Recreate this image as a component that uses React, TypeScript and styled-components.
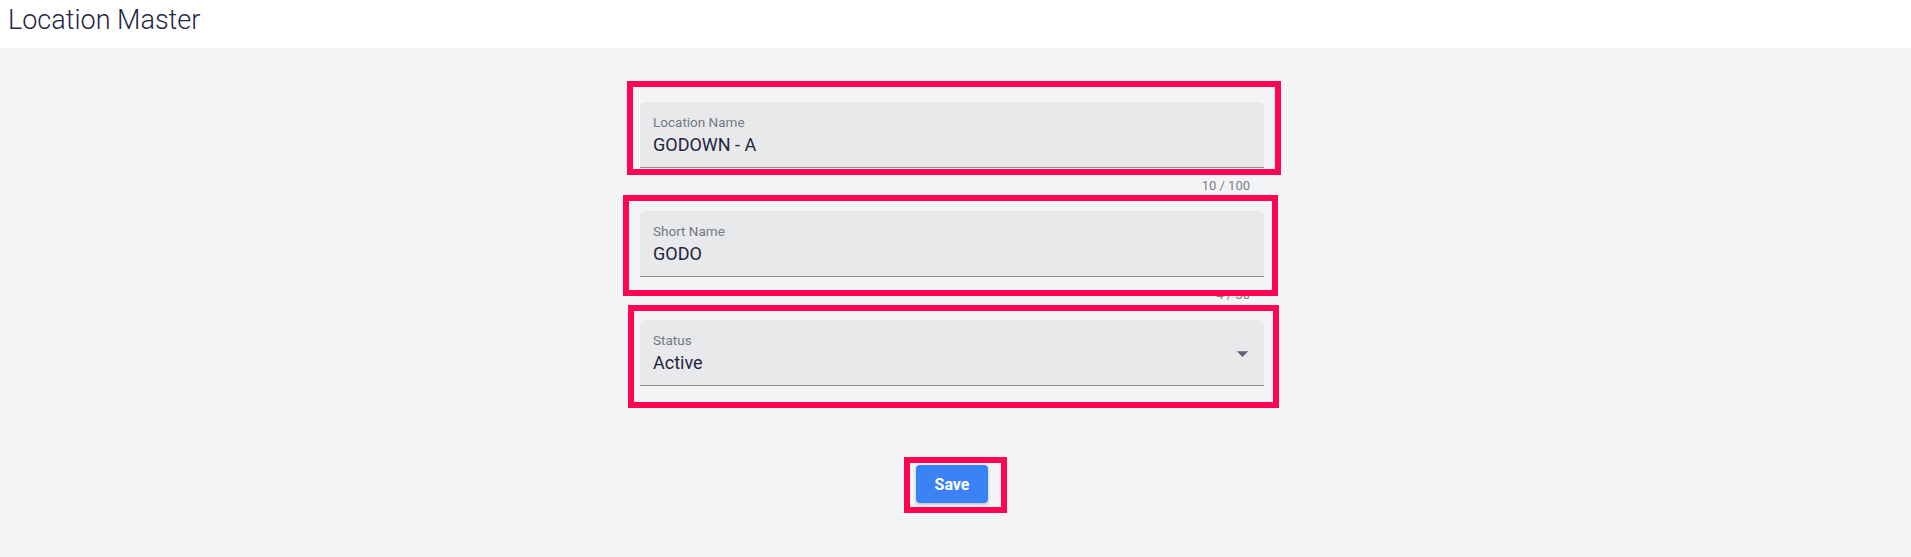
import React from 'react'
import styled, { createGlobalStyle } from 'styled-components'

const GlobalStyle = createGlobalStyle`
    html, body {
        margin: 0;
        padding: 0;
        height: 100%;
    }
    body {
        font-family: Roboto, 'Liberation Sans', Arial, sans-serif;
        background: #f3f4f6;
    }
    #root {
        min-height: 100vh;
        display: flex;
        flex-direction: column;
    }
`

const Header = styled.header`
    height: 48px;
    box-sizing: border-box;
    padding: 4px 0 0 8px;
    background: #ffffff;
`

const Title = styled.h1`
    margin: 0;
    font-family: Roboto, sans-serif;
    font-weight: 300;
    font-size: 27px;
    line-height: 1.2;
    color: #1e2745;
`

const Main = styled.main`
    flex: 1;
    display: flex;
    justify-content: center;
    padding: 54px 7px 0 0;
    background: #f3f4f6;
`

const Form = styled.form`
    width: 624px;
    display: flex;
    flex-direction: column;
    gap: 16px;
`

const FieldBlock = styled.div`
    display: flex;
    flex-direction: column;
`

const Field = styled.div`
    position: relative;
    display: flex;
    align-items: center;
    height: 66px;
    box-sizing: border-box;
    padding: 12px 13px 10px 13px;
    background: #e8e9eb;
    border-radius: 5px 5px 0 0;
    border-bottom: 1px solid #8c8d90;
`

const FieldContent = styled.div`
    flex: 1;
    display: flex;
    flex-direction: column;
    gap: 3px;
`

const Label = styled.label`
    font-size: 13.5px;
    line-height: 16px;
    color: #737884;
`

const Value = styled.div`
    font-size: 18px;
    line-height: 24px;
    color: #1f2640;
`

const Counter = styled.div`
    margin-top: 9px;
    padding-right: 14px;
    text-align: right;
    font-size: 13px;
    line-height: 18px;
    color: #7b7e84;
`

const DropIcon = styled.svg`
    width: 27px;
    height: 27px;
    margin-right: -5px;
    fill: #62607a;
`

const ButtonRow = styled.div`
    margin-top: 63px;
    display: flex;
    justify-content: center;
`

const ButtonWrap = styled.div`
    position: relative;
`

const SaveButton = styled.button`
    width: 72px;
    height: 38px;
    border: none;
    border-radius: 4px;
    background: #3b82f6;
    color: #ffffff;
    font-family: Roboto, sans-serif;
    font-weight: 700;
    font-size: 16px;
    box-shadow: 0 1px 3px rgba(0, 0, 0, 0.25);
    cursor: pointer;
`

interface Offsets {
    $t: number
    $l: number
    $r: number
    $b: number
}

// annotation frame drawn over the real control
const Highlight = styled.span<Offsets>`
    position: absolute;
    top: ${(p) => -p.$t}px;
    left: ${(p) => -p.$l}px;
    right: ${(p) => -p.$r}px;
    bottom: ${(p) => -p.$b}px;
    border: 6px solid #ff0450;
    pointer-events: none;
`

const ArrowDropDown = () => (
    <DropIcon viewBox="0 0 24 24">
        <path d="M7 10l5 5 5-5z" />
    </DropIcon>
)

export default function App() {
    return (
        <>
            <GlobalStyle />
            <Header>
                <Title>Location Master</Title>
            </Header>
            <Main>
                <Form onSubmit={(e) => e.preventDefault()}>
                    <FieldBlock>
                        <Field>
                            <FieldContent>
                                <Label>Location Name</Label>
                                <Value>GODOWN - A</Value>
                            </FieldContent>
                            <Highlight $t={21} $l={13} $r={17} $b={8} />
                        </Field>
                        <Counter>10 / 100</Counter>
                    </FieldBlock>
                    <FieldBlock>
                        <Field>
                            <FieldContent>
                                <Label>Short Name</Label>
                                <Value>GODO</Value>
                            </FieldContent>
                            <Highlight $t={16} $l={17} $r={14} $b={20} />
                        </Field>
                        <Counter>4 / 30</Counter>
                    </FieldBlock>
                    <FieldBlock>
                        <Field>
                            <FieldContent>
                                <Label>Status</Label>
                                <Value>Active</Value>
                            </FieldContent>
                            <ArrowDropDown />
                            <Highlight $t={15} $l={12} $r={15} $b={23} />
                        </Field>
                    </FieldBlock>
                    <ButtonRow>
                        <ButtonWrap>
                            <SaveButton type="submit">Save</SaveButton>
                            <Highlight $t={8} $l={12} $r={19} $b={10} />
                        </ButtonWrap>
                    </ButtonRow>
                </Form>
            </Main>
        </>
    )
}
